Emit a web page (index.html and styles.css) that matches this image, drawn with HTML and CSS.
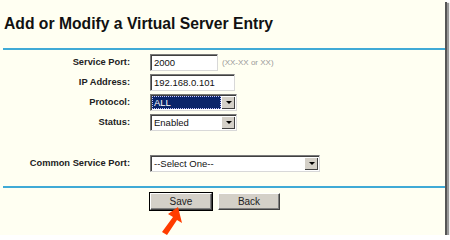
FILE: index.html
```html
<!DOCTYPE html>
<html lang="en">
<head>
  <meta charset="UTF-8">
  <title>Add or Modify a Virtual Server Entry</title>
  <link rel="stylesheet" href="styles.css">
</head>
<body>
  <div class="page">
    <h1>Add or Modify a Virtual Server Entry</h1>
    <hr class="rule">

    <div class="rows">
      <label class="lbl">Service Port:</label>
      <div class="ctl">
        <span class="field w-port">2000</span>
        <span class="hint">(XX-XX or XX)</span>
      </div>

      <label class="lbl">IP Address:</label>
      <div class="ctl"><span class="field w-ip">192.168.0.101</span></div>

      <label class="lbl">Protocol:</label>
      <div class="ctl">
        <div class="select w-proto">
          <span class="value selected">ALL</span>
          <span class="drop"><i class="tri"></i></span>
        </div>
      </div>

      <label class="lbl">Status:</label>
      <div class="ctl">
        <div class="select w-proto">
          <span class="value">Enabled</span>
          <span class="drop"><i class="tri"></i></span>
        </div>
      </div>

      <label class="lbl common">Common Service Port:</label>
      <div class="ctl common">
        <div class="select w-common">
          <span class="value">--Select One--</span>
          <span class="drop"><i class="tri"></i></span>
        </div>
      </div>
    </div>

    <hr class="rule rule-low">

    <div class="buttons">
      <button class="btn default">Save</button>
      <button class="btn">Back</button>
    </div>

    <svg class="arrow" width="30" height="30" viewBox="0 0 30 30">
      <polygon points="21,1 25,17 20,14 10,29 5,26 16,11 11,8" fill="#ff3c00"/>
    </svg>
  </div>
</body>
</html>
```

FILE: styles.css
```css
body {
  margin: 0;
  background: #fff;
  font-family: "Liberation Sans", Arial, sans-serif;
}

.page {
  position: relative;
  width: 445px;
  height: 235px;
  background: #fffff2;
  box-shadow: 2px 2px 0 #555, 4px 3px 1px #999;
}

h1 {
  box-sizing: border-box;
  margin: 0;
  padding: 15px 0 0 4px;
  font-size: 15.7px;
  font-weight: bold;
  color: #111;
  height: 48px;
}

.rule {
  margin: 0 0 0 3px;
  border: 0;
  height: 2px;
  background: #40aad6;
}

.rows {
  display: grid;
  grid-template-columns: 130px auto;
  column-gap: 20px;
  row-gap: 4px;
  padding-top: 4px;
  align-items: center;
}

.lbl {
  text-align: right;
  font-size: 9.3px;
  font-weight: bold;
  color: #222;
}

.ctl {
  display: flex;
  align-items: center;
  height: 16px;
}

.lbl.common, .ctl.common {
  margin-top: 21px;
}

.field {
  box-sizing: border-box;
  height: 17px;
  padding: 2px 3px;
  font-size: 9.5px;
  line-height: 12px;
  color: #111;
  background: #fff;
  border: 1px solid;
  border-color: #7a7a7a #d8d8d8 #d8d8d8 #7a7a7a;
  box-shadow: inset 1px 1px 0 #404040;
}

.w-port { width: 68px; }
.w-ip { width: 85px; }
.w-proto { width: 87px; }
.w-common { width: 170px; }

.hint {
  margin-left: 4px;
  font-size: 8px;
  color: #999;
}

.select {
  box-sizing: border-box;
  display: flex;
  height: 17px;
  background: #fff;
  border: 1px solid;
  border-color: #7a7a7a #d8d8d8 #d8d8d8 #7a7a7a;
  box-shadow: inset 1px 1px 0 #404040;
  padding: 1px;
}

.value {
  flex: 1;
  font-size: 9.5px;
  line-height: 13px;
  padding-left: 2px;
  color: #111;
}

.value.selected {
  background: #0a246a;
  color: #fff;
  outline: 1px dotted #c8c8ff;
  outline-offset: -1px;
}

.drop {
  width: 13px;
  background: #d4d0c8;
  border-left: 1px solid #fff;
  border-top: 1px solid #fff;
  box-shadow: inset -1px -1px 0 #404040;
  display: flex;
  align-items: center;
  justify-content: center;
}

.tri {
  width: 0;
  height: 0;
  border-left: 3px solid transparent;
  border-right: 3px solid transparent;
  border-top: 3px solid #000;
}

.rule-low {
  margin-top: 15px;
}

.buttons {
  display: flex;
  gap: 6px;
  padding: 5px 0 0 150px;
}

.btn {
  box-sizing: border-box;
  width: 62px;
  height: 17px;
  padding: 0;
  font-family: "Liberation Sans", Arial, sans-serif;
  font-size: 10px;
  color: #222;
  background: #d4d0c8;
  border: 1px solid;
  border-color: #fff #404040 #404040 #fff;
  box-shadow: inset -1px -1px 0 #808080;
}

.btn.default {
  outline: 1px solid #000;
}

.arrow {
  position: absolute;
  left: 157px;
  top: 206px;
}
```
